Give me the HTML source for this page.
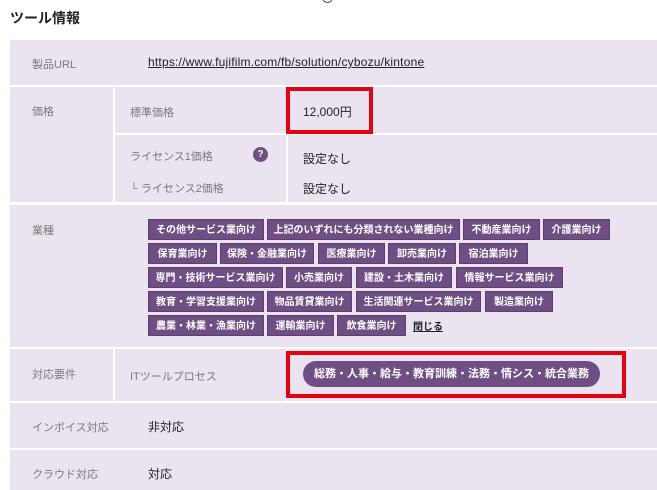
<!DOCTYPE html>
<html><head><meta charset="utf-8"><style>
html,body{margin:0}
body{width:657px;height:488px;overflow:hidden;background:#fff;font-family:"Liberation Sans","Noto Sans CJK JP",sans-serif;position:relative}
.a{position:absolute}
.bg{background:#ebe3f0}
.lb{color:#7a7a7a;font-size:11px}
.v{color:#222;font-size:12px}
.t{position:absolute;height:21px;background:#6f4f83;color:#fff;font-size:10px;font-weight:bold;line-height:21px;text-align:center;border:1px solid #5c3f70;box-sizing:border-box;white-space:nowrap}
</style></head><body>
<div class="a" style="left:322px;top:-8px;width:9px;height:9px;border:1.5px solid #555;border-radius:50%"></div>
<div class="a" style="left:10px;top:8px;font-size:14px;font-weight:bold;color:#222">ツール情報</div>
<div class="a bg" style="left:10px;top:40px;width:660px;height:45px"></div>
<div class="a lb" style="left:32px;top:56px">製品URL</div>
<div class="a v" style="left:148px;top:55px;text-decoration:underline;letter-spacing:0.2px">https://www.fujifilm.com/fb/solution/cybozu/kintone</div>
<div class="a bg" style="left:10px;top:87px;width:103px;height:115px"></div>
<div class="a bg" style="left:115px;top:87px;width:171px;height:46px"></div>
<div class="a bg" style="left:288px;top:87px;width:380px;height:46px"></div>
<div class="a bg" style="left:115px;top:135px;width:171px;height:67px"></div>
<div class="a bg" style="left:288px;top:135px;width:380px;height:67px"></div>
<div class="a lb" style="left:32px;top:103px">価格</div>
<div class="a lb" style="left:130px;top:104px">標準価格</div>
<div class="a v" style="left:303px;top:103px">12,000円</div>
<div class="a" style="left:286px;top:87px;width:79px;height:39px;border:4px solid #e60012"></div>
<div class="a lb" style="left:130px;top:148px">ライセンス1価格</div>
<div class="a" style="left:253px;top:147px;width:15px;height:15px;border-radius:50%;background:#6f4f83;color:#fff;font-size:10px;font-weight:bold;text-align:center;line-height:15px">?</div>
<div class="a v" style="left:303px;top:150px">設定なし</div>
<div class="a lb" style="left:130px;top:180px">└ ライセンス2価格</div>
<div class="a v" style="left:303px;top:180px">設定なし</div>
<div class="a bg" style="left:10px;top:205px;width:660px;height:142px"></div>
<div class="a lb" style="left:32px;top:222px">業種</div>
<div class="t" style="left:148px;top:219px;width:116px">その他サービス業向け</div>
<div class="t" style="left:267px;top:219px;width:193px">上記のいずれにも分類されない業種向け</div>
<div class="t" style="left:463px;top:219px;width:77px">不動産業向け</div>
<div class="t" style="left:543px;top:219px;width:67px">介護業向け</div>
<div class="t" style="left:148px;top:243px;width:69px">保育業向け</div>
<div class="t" style="left:220px;top:243px;width:94px">保険・金融業向け</div>
<div class="t" style="left:318px;top:243px;width:67px">医療業向け</div>
<div class="t" style="left:388px;top:243px;width:68px">卸売業向け</div>
<div class="t" style="left:459px;top:243px;width:69px">宿泊業向け</div>
<div class="t" style="left:148px;top:267px;width:135px">専門・技術サービス業向け</div>
<div class="t" style="left:286px;top:267px;width:66px">小売業向け</div>
<div class="t" style="left:356px;top:267px;width:96px">建設・土木業向け</div>
<div class="t" style="left:456px;top:267px;width:107px">情報サービス業向け</div>
<div class="t" style="left:148px;top:291px;width:116px">教育・学習支援業向け</div>
<div class="t" style="left:267px;top:291px;width:85px">物品賃貸業向け</div>
<div class="t" style="left:356px;top:291px;width:125px">生活関連サービス業向け</div>
<div class="t" style="left:485px;top:291px;width:68px">製造業向け</div>
<div class="t" style="left:148px;top:315px;width:116px">農業・林業・漁業向け</div>
<div class="t" style="left:267px;top:315px;width:67px">運輸業向け</div>
<div class="t" style="left:337px;top:315px;width:69px">飲食業向け</div>
<div class="a" style="left:413px;top:318px;font-size:10px;font-weight:bold;color:#222;text-decoration:underline">閉じる</div>
<div class="a bg" style="left:10px;top:349px;width:103px;height:52px"></div>
<div class="a bg" style="left:115px;top:349px;width:171px;height:52px"></div>
<div class="a bg" style="left:288px;top:349px;width:380px;height:52px"></div>
<div class="a lb" style="left:32px;top:366px">対応要件</div>
<div class="a lb" style="left:130px;top:368px">ITツールプロセス</div>
<div class="a" style="left:286px;top:351px;width:332px;height:39px;border:4px solid #e60012"></div>
<div class="a" style="left:303px;top:361px;width:297px;height:26px;border-radius:13px;background:#6f4f83;color:#fff;font-size:11px;font-weight:bold;line-height:26px;text-align:center">総務・人事・給与・教育訓練・法務・情シス・統合業務</div>
<div class="a bg" style="left:10px;top:403px;width:660px;height:45px"></div>
<div class="a lb" style="left:32px;top:419px">インボイス対応</div>
<div class="a v" style="left:148px;top:418px">非対応</div>
<div class="a bg" style="left:10px;top:450px;width:660px;height:40px"></div>
<div class="a lb" style="left:32px;top:466px">クラウド対応</div>
<div class="a v" style="left:148px;top:465px">対応</div>
</body></html>
